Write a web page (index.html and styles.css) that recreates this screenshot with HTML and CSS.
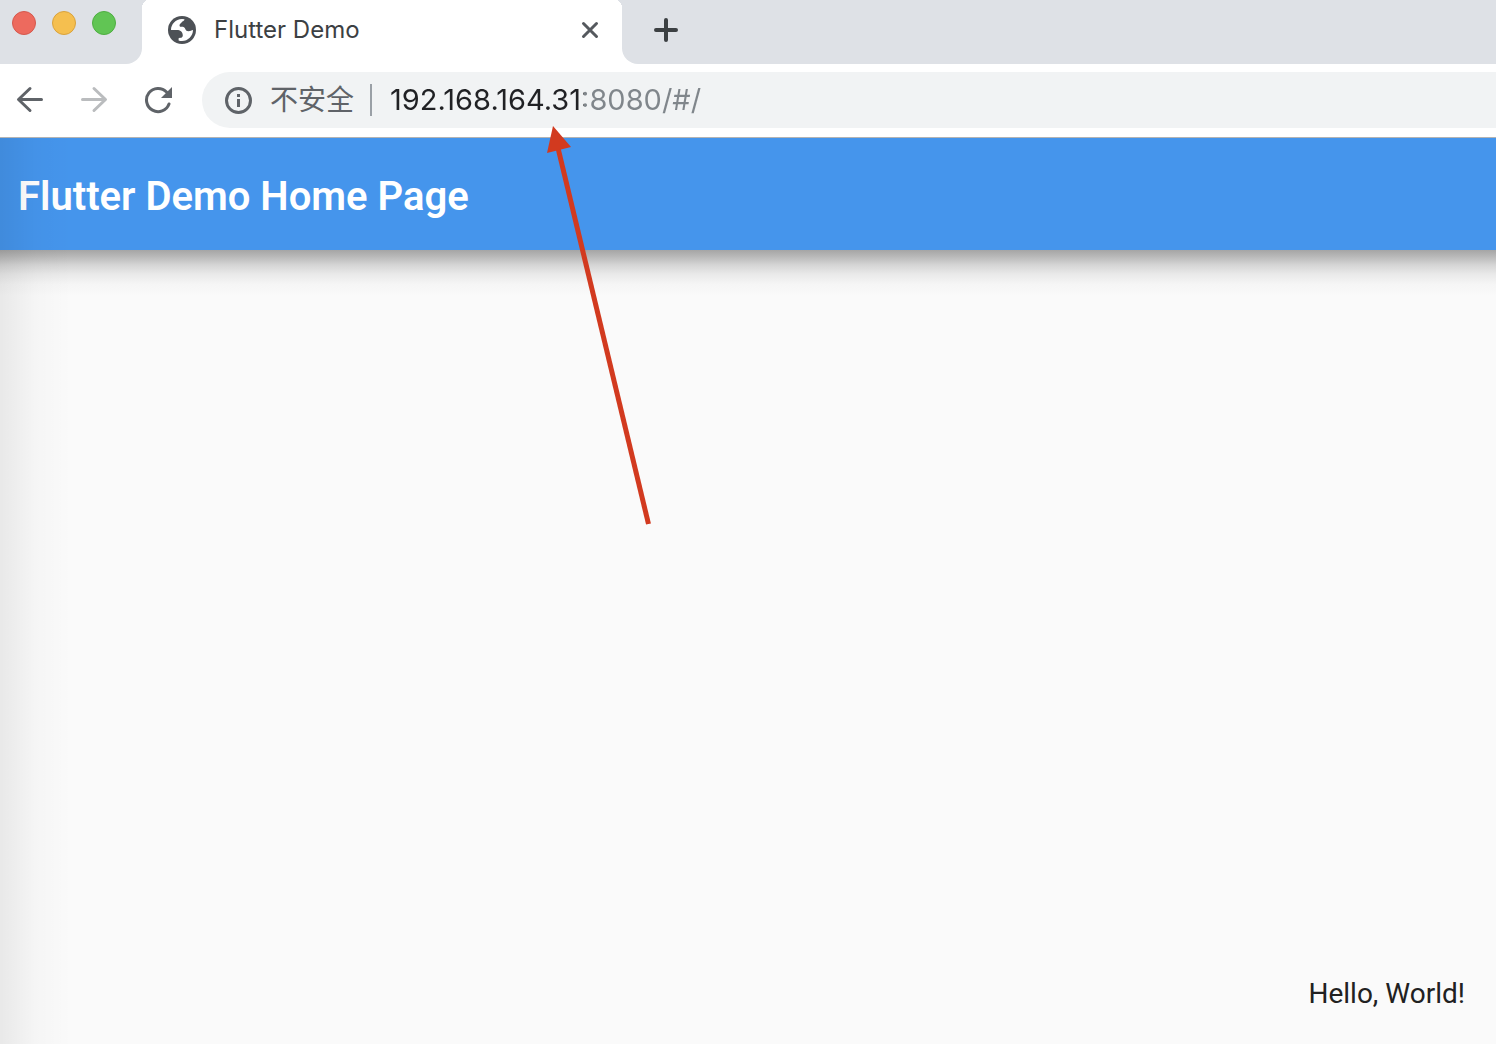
FILE: index.html
```html
<!DOCTYPE html>
<html lang="en">
<head>
<meta charset="utf-8">
<title>Flutter Demo</title>
<link rel="stylesheet" href="styles.css">
</head>
<body>
<div class="window">
  <header class="tabstrip">
    <div class="controls">
      <button class="light light-red" aria-label="Close window"></button>
      <button class="light light-yellow" aria-label="Minimize window"></button>
      <button class="light light-green" aria-label="Zoom window"></button>
    </div>
    <div class="tab">
      <svg class="globe" viewBox="0 0 28 28" aria-hidden="true">
        <circle cx="14" cy="14" r="14" fill="#4d5156"/>
        <path fill="#fff" d="M3 14C3 8.500 7.500 3.300 14 3.100L16.500 3.300C16.500 5 14.500 5 13.500 6.500C12.700 8 11.500 7.500 11.500 9.500L12 10.800C14 11 16 10.500 16.800 12C17.500 14 18.500 15.300 20.500 15.300C22.500 15.300 23.500 14.200 25 14C25 20 20 25 14 25C12.500 25 11.500 24.800 10.600 24.400L10.600 22.200C12.500 22 14.800 21.800 14.800 19.500C14.800 15.500 12 14 9 14Z"/>
      </svg>
      <span class="tab-title">Flutter Demo</span>
      <button class="icon-button tab-close" aria-label="Close tab">
        <svg width="20" height="20" viewBox="0 0 20 20" fill="none" stroke="#55595e" stroke-width="3" stroke-linecap="round"><path d="M3.500 3.500 16.500 16.500M16.500 3.500 3.500 16.500"/></svg>
      </button>
    </div>
    <button class="icon-button new-tab" aria-label="New tab">
      <svg width="24" height="24" viewBox="0 0 24 24" fill="none" stroke="#3c4043" stroke-width="4" stroke-linecap="round"><path d="M12 2V22M2 12H22"/></svg>
    </button>
  </header>
  <nav class="toolbar">
    <button class="icon-button" aria-label="Back">
      <svg width="28" height="28" viewBox="0 0 28 28" fill="none" stroke="#5f6368" stroke-width="3" stroke-linecap="round" stroke-linejoin="round"><path d="M25.500 13.500H3M14 2.500 2.500 13.500 14 24.500"/></svg>
    </button>
    <button class="icon-button" aria-label="Forward">
      <svg width="28" height="28" viewBox="0 0 28 28" fill="none" stroke="#babcbe" stroke-width="3" stroke-linecap="round" stroke-linejoin="round"><path d="M2.500 13.500H25M14 2.500 25.500 13.500 14 24.500"/></svg>
    </button>
    <button class="icon-button" aria-label="Reload">
      <svg width="28" height="28" viewBox="0 0 28 28"><path d="M25 18A11.600 11.600 0 1 1 22.500 6" fill="none" stroke="#5f6368" stroke-width="3" stroke-linecap="round"/><path d="M28 1V12H17Z" fill="#5f6368"/></svg>
    </button>
    <div class="omnibox">
      <svg width="28" height="28" viewBox="0 0 28 28" aria-hidden="true"><circle cx="14.500" cy="14.500" r="12" fill="none" stroke="#5f6368" stroke-width="3"/><path d="M13 8H16V11H13ZM13 13H16V21H13Z" fill="#5f6368"/></svg>
      <label class="security" for="address" lang="zh">不安全</label>
      <input class="address" id="address" type="text" value="192.168.164.31:8080/#/" spellcheck="false">
    </div>
  </nav>
  <div class="appbar"><h1 class="appbar-title">Flutter Demo Home Page</h1></div>
  <main class="content"><p class="greeting">Hello, World!</p></main>
  <div class="edge-shade"></div>
  <svg class="arrow" width="120" height="400" viewBox="0 0 120 400" aria-hidden="true"><path d="M18 22 108.500 398" stroke="#d23a1f" stroke-width="5" fill="none"/><path d="M13 0 31 21 7 27Z" fill="#d23a1f"/></svg>
</div>
</body>
</html>
```
FILE: styles.css
```css
* { box-sizing: border-box; }
body { margin: 0; font-family: Inter, "Noto Sans CJK SC", sans-serif; }
button { border: 0; padding: 0; background: none; }
svg { display: block; }

.window {
  position: relative;
  display: flex;
  flex-direction: column;
  min-height: 100vh;
  overflow: hidden;
}

.tabstrip { display: flex; height: 64px; background: #fff; }
.controls {
  display: flex;
  gap: 16px;
  width: 142px;
  padding: 11px 12px;
  background: #dee1e6;
  border-radius: 0 0 16px 0;
}
.light { width: 24px; height: 24px; border: 1px solid; border-radius: 50%; }
.light-red { background: #ed6a5e; border-color: #d5584d; }
.light-yellow { background: #f5bf4f; border-color: #d9a23c; }
.light-green { background: #61c554; border-color: #4eae41; }

.tab {
  position: relative;
  display: flex;
  align-items: center;
  width: 480px;
  height: 60px;
  padding: 0 22px 0 26px;
}
.tab::before, .tab::after {
  content: "";
  position: absolute;
  top: 0;
  width: 6px;
  height: 8px;
}
.tab::before { left: 0; background: radial-gradient(ellipse 6px 8px at 100% 100%, #fff 98%, #dee1e6); }
.tab::after { right: 0; background: radial-gradient(ellipse 6px 8px at 0 100%, #fff 98%, #dee1e6); }
.globe { width: 28px; height: 28px; margin-right: 18px; }
.tab-title { flex: 1; font-size: 24px; line-height: 32px; color: #3c4043; }
.new-tab {
  flex: 1;
  padding: 18px 32px 22px;
  background: #dee1e6;
  border-radius: 0 0 0 16px;
}

.toolbar {
  display: flex;
  align-items: center;
  gap: 36px;
  height: 74px;
  padding: 8px 0 9px 16px;
  border-bottom: 1px solid #b3b3b3;
  background: #fff;
}
.omnibox {
  display: flex;
  flex: 1;
  align-items: center;
  height: 56px;
  margin-left: -6px;
  padding-left: 22px;
  background: #f1f3f4;
  border-radius: 28px 0 0 28px;
}
.security {
  margin-left: 18px;
  padding-right: 16px;
  border-right: 2px solid #9aa0a6;
  font-size: 28px;
  line-height: 32px;
  color: #5f6368;
}
.address {
  flex: 1;
  height: 40px;
  padding: 0;
  margin-left: 18px;
  border: 0;
  outline: 0;
  font: 29px/40px Inter, sans-serif;
  color: #202124;
  background: linear-gradient(90deg, #202124 194px, #80868b 194px) text;
  -webkit-text-fill-color: transparent;
}

.appbar {
  display: flex;
  align-items: center;
  height: 112px;
  padding: 6px 18px 0;
  background: #4595ec;
}
.appbar-title {
  margin: 0;
  font: 600 40px/48px Roboto, sans-serif;
  color: #fff;
}
.content {
  display: flex;
  flex: 1;
  align-items: flex-end;
  justify-content: flex-end;
  padding: 32px 31px;
  background: linear-gradient(#a5a5a5, #bababa 7px, #d5d5d5 15px, #e9e9e9 24px, #f5f5f5 34px, #fafafa 46px);
}
.greeting { margin: 0; font: 28px/36px Roboto, sans-serif; color: #212121; }

.edge-shade {
  position: absolute;
  top: 138px;
  bottom: 0;
  left: 0;
  width: 72px;
  background: linear-gradient(90deg, rgba(0, 0, 0, .07), rgba(0, 0, 0, .02) 50%, transparent);
  pointer-events: none;
}
.arrow { position: absolute; top: 126px; left: 540px; pointer-events: none; }
```
